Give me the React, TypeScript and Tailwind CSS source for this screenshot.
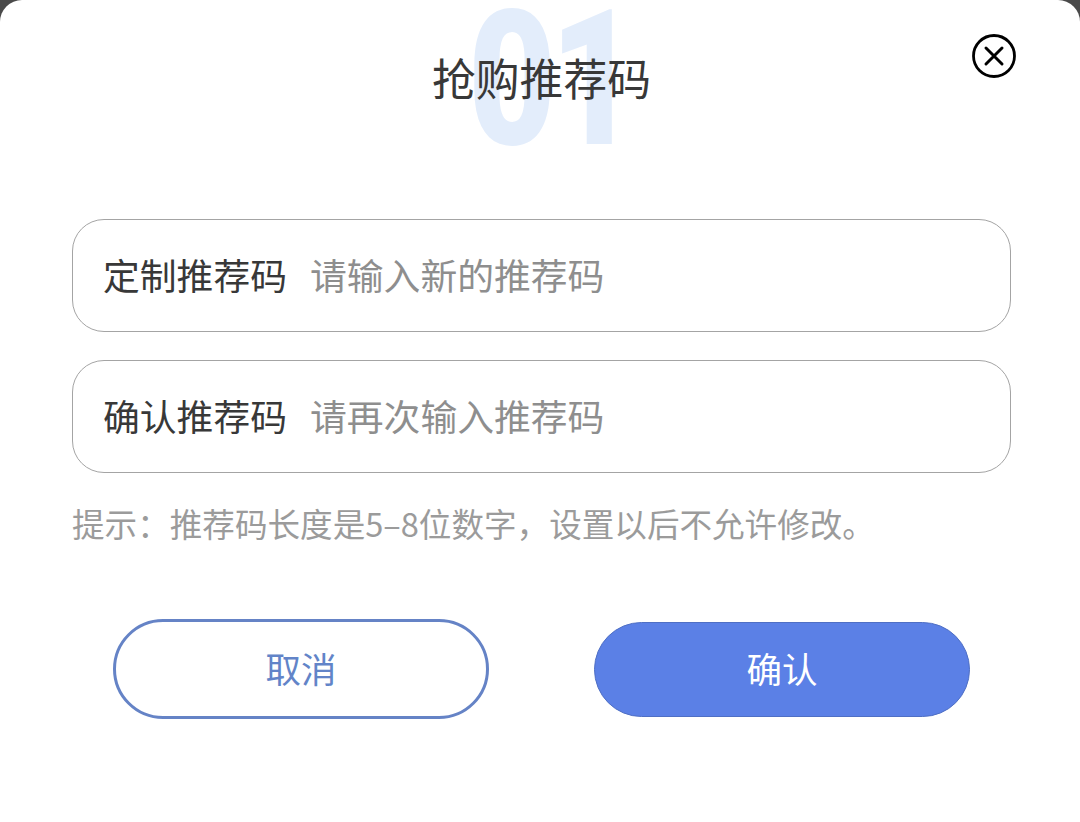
import * as React from 'react';

const font = "font-['Noto_Sans_CJK_SC','Noto_Sans',sans-serif]";

function Field({ label, placeholder }: { label: string; placeholder: string }) {
    return (
        <div className="flex h-[113px] items-center rounded-[32px] border border-[#a4a4a4] pb-[3px] pl-[30px]">
            <span className="w-[207px] text-[36.8px] leading-none text-[#383838]">{label}</span>
            <span className="text-[36.8px] leading-none text-[#8e8e8e]">{placeholder}</span>
        </div>
    );
}

export default function App() {
    return (
        <div className={`h-[822px] w-[1080px] overflow-hidden bg-[#4a4a4a] ${font}`}>
            <div className="relative h-[822px] w-full rounded-t-[22px] bg-white pl-[72px] pr-[69px] pt-[219px]">
                <div className="absolute left-[468px] top-[3px] origin-left font-['Roboto',sans-serif] text-[190px] font-black leading-[0.8] tracking-[-8px] text-[#e3edfb] [transform:scaleX(0.8)]">
                    01
                </div>
                <h1 className="absolute inset-x-0 top-[48px] pl-[3px] text-center text-[43.8px] font-normal leading-[58px] text-[#383838]">
                    抢购推荐码
                </h1>
                <button className="absolute left-[972px] top-[34px] text-black">
                    <svg width="44" height="44" viewBox="0 0 44 44" fill="none" stroke="currentColor" strokeLinecap="round">
                        <circle cx="22" cy="22" r="20.5" strokeWidth="2.8" />
                        <path d="M14 14 30 30M30 14 14 30" strokeWidth="3" />
                    </svg>
                </button>
                <div className="relative flex flex-col gap-[28px]">
                    <Field label="定制推荐码" placeholder="请输入新的推荐码" />
                    <Field label="确认推荐码" placeholder="请再次输入推荐码" />
                </div>
                <p className="relative mt-[27px] whitespace-nowrap text-[32.6px] leading-[46px] text-[#9b9b9b]">
                    {'提示\uFF1A推荐码长度是5\u20138位数字\uFF0C设置以后不允许修改。'}
                </p>
                <div className="relative mt-[73px] flex items-center pl-[41px]">
                    <button className="flex h-[100px] w-[376px] items-center justify-center rounded-full border-[3px] border-[#6583c6] pb-[3px] text-[35.5px] text-[#6284c8]">
                        取消
                    </button>
                    <button className="ml-[105px] flex h-[95px] w-[376px] items-center justify-center rounded-full border border-[#4f6fc4] bg-[#5b80e6] pb-[3px] text-[35.5px] text-white">
                        确认
                    </button>
                </div>
            </div>
        </div>
    );
}
